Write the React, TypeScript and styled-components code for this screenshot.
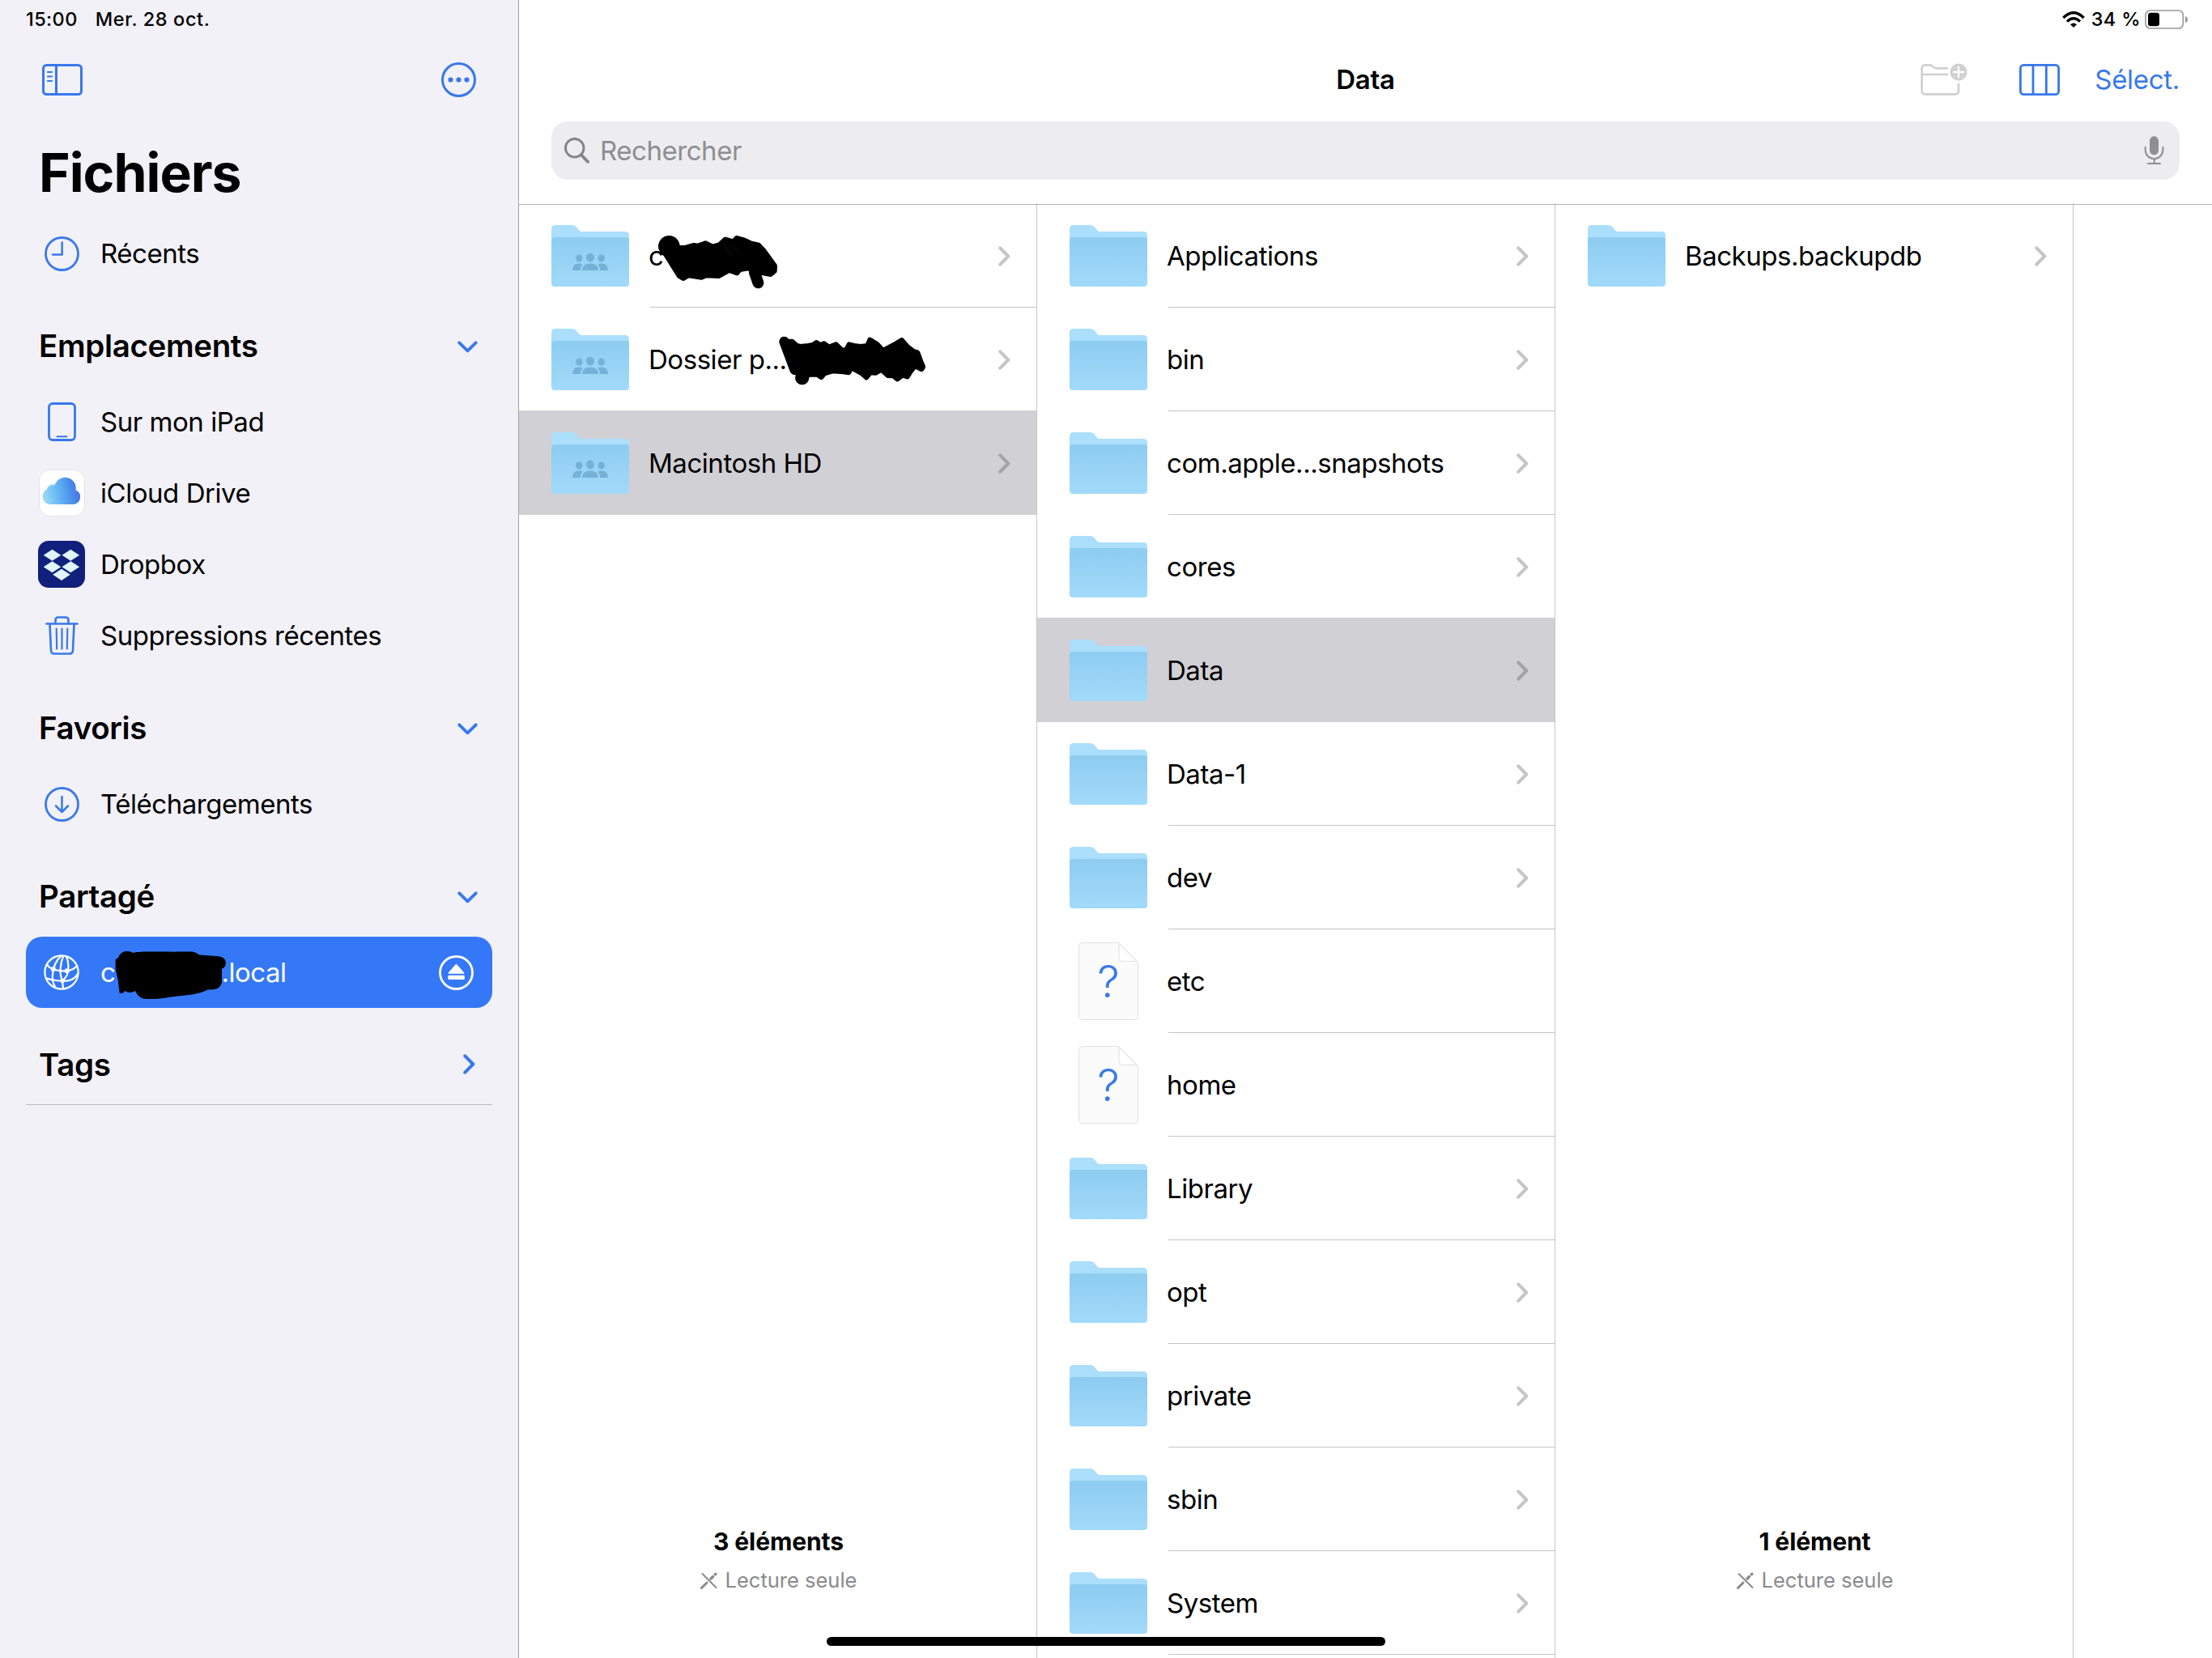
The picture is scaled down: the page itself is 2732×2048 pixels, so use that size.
import React from 'react';
import styled, { createGlobalStyle } from 'styled-components';

const TINT = '#3878ec';
const SELECTED_BLUE = '#3478f7';

interface Entry {
	name: string;
	kind?: 'folder' | 'shared' | 'file';
	selected?: boolean;
	scribble?: 'first' | 'second';
}

const shares: Entry[] = [
	{ name: 'c', kind: 'shared', scribble: 'first' },
	{ name: 'Dossier p...', kind: 'shared', scribble: 'second' },
	{ name: 'Macintosh HD', kind: 'shared', selected: true }
];

const volumes: Entry[] = [
	{ name: 'Applications' },
	{ name: 'bin' },
	{ name: 'com.apple...snapshots' },
	{ name: 'cores' },
	{ name: 'Data', selected: true },
	{ name: 'Data-1' },
	{ name: 'dev' },
	{ name: 'etc', kind: 'file' },
	{ name: 'home', kind: 'file' },
	{ name: 'Library' },
	{ name: 'opt' },
	{ name: 'private' },
	{ name: 'sbin' },
	{ name: 'System' }
];

const backups: Entry[] = [{ name: 'Backups.backupdb' }];

const SidebarIcon = () => (
	<svg width="50" height="39" viewBox="0 0 50 39" fill="none" stroke={TINT} strokeWidth="3">
		<rect x="1.5" y="1.5" width="47" height="36" rx="4" />
		<path d="M17.5 2v35" />
		<path d="M7 10h5M7 15.5h5M7 21h5" strokeWidth="2.2" strokeLinecap="round" />
	</svg>
);

const MoreIcon = () => (
	<svg width="43" height="43" viewBox="0 0 43 43" fill={TINT}>
		<circle cx="21.5" cy="21.5" r="20" fill="none" stroke={TINT} strokeWidth="3" />
		<circle cx="11.5" cy="21.5" r="3.1" />
		<circle cx="21.5" cy="21.5" r="3.1" />
		<circle cx="31.5" cy="21.5" r="3.1" />
	</svg>
);

const ClockIcon = () => (
	<svg width="43" height="43" viewBox="0 0 43 43" fill="none" stroke={TINT} strokeWidth="2.8" strokeLinecap="round" strokeLinejoin="round">
		<circle cx="21.5" cy="21.5" r="20" />
		<path d="M21.7 7.5v15H10" strokeWidth="2.5" />
	</svg>
);

const TabletIcon = () => (
	<svg width="35" height="48" viewBox="0 0 35 48" fill="none" stroke={TINT} strokeWidth="2.8" strokeLinecap="round">
		<rect x="1.5" y="1.5" width="32" height="45" rx="4.5" />
		<path d="M11.5 42.3h12" strokeWidth="2" />
	</svg>
);

const CloudIcon = () => (
	<svg width="57" height="58" viewBox="0 0 57 58">
		<defs>
			<linearGradient id="cloud" x1="0" y1="0.75" x2="1" y2="0.6">
				<stop offset="0" stopColor="#9fdcf3" />
				<stop offset="0.4" stopColor="#67b9f6" />
				<stop offset="0.75" stopColor="#4b91ea" />
				<stop offset="1" stopColor="#4a70e6" />
			</linearGradient>
		</defs>
		<rect x="0.5" y="0.5" width="56" height="57" rx="13" fill="#fff" stroke="#e2e2e6" />
		<circle cx="17.5" cy="26" r="7.8" fill="#8cd0f2" />
		<path d="M14.5 43a9.8 9.8 0 0 1-3-19.2 8 8 0 0 1 8-3.3 13.2 13.2 0 0 1 26 4.8 9.3 9.3 0 0 1-2.2 17.7Z" fill="url(#cloud)" />
	</svg>
);

const DropboxIcon = () => (
	<svg width="58" height="58" viewBox="0 0 58 58">
		<rect width="58" height="58" rx="13" fill="#11207b" />
		<path
			d="M17.5 10.7 28.3 17.7 17.5 24.7 6.7 17.7ZM40.3 10.7 51.1 17.7 40.3 24.7 29.5 17.7ZM17.5 25.2 28.3 32.2 17.5 39.2 6.7 32.2ZM40.3 25.2 51.1 32.2 40.3 39.2 29.5 32.2ZM29 34.7 39.8 41.7 29 49 18.2 41.7Z"
			fill="#dff5ff"
		/>
	</svg>
);

const TrashIcon = () => (
	<svg width="41" height="48" viewBox="0 0 41 48" fill="none" stroke={TINT} strokeWidth="2.6" strokeLinecap="round" strokeLinejoin="round">
		<path d="M1.5 9.5h38" />
		<path d="M12.5 9V5Q12.5 1.5 16 1.5h9Q28.5 1.5 28.5 5V9" />
		<path d="M5.5 10 7 42.5Q7.3 46.5 11 46.5H30Q33.7 46.5 34 42.5L35.5 10" />
		<path d="M13.7 15.5 14.2 40.5M20.5 15.5V40.5M27.3 15.5 26.8 40.5" strokeWidth="2.2" />
	</svg>
);

const DownloadIcon = () => (
	<svg width="43" height="43" viewBox="0 0 43 43" fill="none" stroke={TINT} strokeWidth="2.8" strokeLinecap="round" strokeLinejoin="round">
		<circle cx="21.5" cy="21.5" r="20" />
		<path d="M21.5 12V31M14 23.5 21.5 31 29 23.5" strokeWidth="2.5" />
	</svg>
);

const GlobeIcon = () => (
	<svg width="44" height="44" viewBox="42 89 130 130" fill="none" stroke="#fff" strokeWidth="6.5">
		<circle cx="107" cy="154" r="61" />
		<path d="M106 93C88 110 76 138 74 165C73 182 77 198 85 209" />
		<path d="M114 93C102 122 98 160 110 184L113 215" />
		<path d="M124 95C134 116 134 145 127 164Q122 175 111 184" />
		<path d="M54 126C64 144 100 151 126 149Q150 146 162 132" />
		<path d="M48 174C70 184 112 188 134 184Q158 177 168 156" />
		<g fill="#fff" stroke="none">
			<circle cx="77" cy="142" r="9" />
			<circle cx="127" cy="149" r="9" />
			<circle cx="110" cy="185" r="8" />
		</g>
	</svg>
);

const EjectIcon = () => (
	<svg width="43" height="43" viewBox="0 0 43 43" fill="#fff">
		<circle cx="21.5" cy="21.5" r="20" fill="none" stroke="#fff" strokeWidth="2.8" />
		<path d="M21.5 11.5 30.7 22H12.3Z" stroke="#fff" strokeWidth="1.5" strokeLinejoin="round" />
		<rect x="11.3" y="24.7" width="20.5" height="5.2" rx="1.2" />
	</svg>
);

const WifiIcon = () => (
	<svg width="28" height="20" viewBox="744 42 84 60" fill="none" stroke="#000" strokeWidth="10">
		<path d="M748 66Q786 28 824 66" />
		<path d="M762 80Q786 57 810 80" />
		<path d="M774 91Q786 80 798 91L786 102Z" fill="#000" stroke="none" />
	</svg>
);

const BatteryIcon = () => (
	<svg width="54" height="24" viewBox="1047 36 162 72">
		<rect x="1050" y="39" width="139" height="66" rx="17" fill="none" stroke="#999" strokeWidth="5" />
		<rect x="1059" y="47" width="42" height="50" rx="10" />
		<path d="M1197 60Q1206 63 1206 72T1197 84Z" fill="#999" />
	</svg>
);

const NewFolderIcon = () => (
	<svg width="58" height="40" viewBox="215 232 174 120" fill="none" stroke="#d0d0d0" strokeWidth="8">
		<path d="M317 251H276Q268 251 262 245Q256 239 248 239H233Q220 239 220 252V334Q220 347 233 347H343Q356 347 356 334V306" />
		<path d="M221 274H317" />
		<circle cx="356" cy="265" r="31.5" fill="#d0d0d0" stroke="none" />
		<path d="M337 265H375M356 246V284" stroke="#fff" strokeWidth="7" strokeLinecap="round" />
	</svg>
);

const ColumnsIcon = () => (
	<svg width="50" height="39" viewBox="0 0 50 39" fill="none" stroke={TINT} strokeWidth="2.8">
		<rect x="1.4" y="1.4" width="47.2" height="36.2" rx="4" />
		<path d="M17 2V37M33.3 2V37" />
	</svg>
);

const SearchIcon = () => (
	<svg width="31" height="32" viewBox="0 0 31 32" fill="none" stroke="#858589" strokeWidth="3">
		<circle cx="12.7" cy="12.7" r="11.3" />
		<path d="M20.8 21.3 29 29.8" strokeWidth="3.8" strokeLinecap="round" />
	</svg>
);

const MicIcon = () => (
	<svg width="25" height="36" viewBox="1042 506 75 108" fill="none" stroke="#8e8e93" strokeWidth="6" strokeLinecap="round">
		<rect x="1063" y="507" width="33" height="69" rx="16.5" fill="#8e8e93" stroke="none" />
		<path d="M1047 547V558A32.5 32.5 0 0 0 1112 558V547M1080 591V607M1057 608H1102" />
	</svg>
);

const PencilSlashIcon = () => (
	<svg width="21" height="21" viewBox="0 0 21 21" fill="none" stroke="#8a8a8d" strokeLinecap="round">
		<path d="M2.5 2 19.5 19" strokeWidth="1.9" />
		<path d="M1.5 19.5 8 13" strokeWidth="3" />
		<path d="M13 8 15.5 5.5M18.3 2.7 18.8 2.2" strokeWidth="3.4" />
	</svg>
);

const ChevronIcon = ({ color }: { color: string }) => (
	<svg width="15" height="25" viewBox="0 0 15 25" fill="none" stroke={color} strokeWidth="4" strokeLinecap="round" strokeLinejoin="round">
		<path d="M2.3 2.3 12.3 12.5 2.3 22.7" />
	</svg>
);

const ChevronDownIcon = () => (
	<svg width="25" height="17" viewBox="0 -2 25 17" fill="none" stroke={TINT} strokeWidth="3.8" strokeLinecap="round" strokeLinejoin="round">
		<path d="M2.3 2.3 12.5 12.3 22.7 2.3" />
	</svg>
);

const FolderIcon = ({ shared }: { shared: boolean }) => (
	<svg width="96" height="76" viewBox="0 0 96 76">
		<defs>
			<linearGradient id="folder" x1="0" y1="0" x2="0" y2="1">
				<stop offset="0" stopColor="#8dccf1" />
				<stop offset="1" stopColor="#a2dafa" />
			</linearGradient>
		</defs>
		<path d="M0 30V5Q0 0 5 0H26Q29 0 31 2.5L34 6.5Q35.5 8 38 8H91Q96 8 96 13V30Z" fill="#abdffc" />
		<path d="M0 19Q0 15 4 15H92Q96 15 96 19V72Q96 76 92 76H4Q0 76 0 72Z" fill="url(#folder)" />
		{shared && (
			<g fill="#75b1d6">
				<ellipse cx="34.3" cy="41" rx="4.2" ry="4.5" />
				<ellipse cx="61.7" cy="41" rx="4.2" ry="4.5" />
				<ellipse cx="48" cy="40" rx="5" ry="5.4" />
				<path d="M38 56Q38 47.5 48 47.5T58 56Z" />
				<path d="M26 56Q26 47.5 34 47.5Q37 47.5 38.7 48.7Q35.8 51.5 35.8 56Z" />
				<path d="M70 56Q70 47.5 62 47.5Q59 47.5 57.3 48.7Q60.2 51.5 60.2 56Z" />
			</g>
		)}
	</svg>
);

const UnknownFileIcon = () => (
	<svg width="74" height="96" viewBox="0 0 74 96" fill="#fbfbfc" stroke="#e0e0e2">
		<path d="M4.5 0.5H48Q50 0.5 51 2L72 23Q73.5 24.5 73.5 27V91.5Q73.5 95.5 69.5 95.5H4.5Q0.5 95.5 0.5 91.5V4.5Q0.5 0.5 4.5 0.5Z" />
		<path d="M50 1.5V19.5Q50 23.5 54 23.5H72Z" fill="#fff" />
		<QuestionMark x="37" y="67.5">
			?
		</QuestionMark>
	</svg>
);

const FirstScribble = () => (
	<Scribble $left={12} $top={-5} width="148" height="67" viewBox="428 60 444 201" strokeWidth="16">
		<circle cx="468" cy="103" r="40" stroke="none" />
		<path d="M445 118 505 214 520 223 540 212 560 215 588 219 605 212 652 214 690 193 720 203 731 190 762 185 780 196 845 208 860 195 861 175 820 118 800 97 770 90 745 78 718 71 706 84 676 76 655 95 630 103 603 90 575 100 560 98 530 106 500 108Z" />
		<path d="M785 200 798 238" strokeWidth="42" />
		<path d="M667 92 702 136M705 104 721 119" stroke="#2c2c2c" strokeWidth="1.5" />
	</Scribble>
);

const SecondScribble = () => (
	<Scribble $left={161} $top={-8} width="182" height="61" viewBox="876 435 546 183" strokeWidth="18">
		<path d="M896 457 925 455 943 471 955 474 985 471 1002 468 1015 459 1030 469 1043 463 1062 476 1088 466 1110 487 1124 488 1136 466 1160 472 1180 474 1204 471 1213 449 1240 465 1262 489 1310 463 1331 450 1352 474 1370 488 1388 500 1410 548 1405 558 1380 547 1363 568 1352 586 1335 580 1315 595 1300 583 1280 582 1256 560 1235 572 1215 571 1200 589 1182 573 1144 552 1135 571 1115 568 1075 565 1045 574 1033 588 1018 578 990 578 962 590 935 565Z" />
		<path d="M896 456 935 560" strokeWidth="38" />
		<path d="M1385 500 1403 551" strokeWidth="30" />
		<circle cx="962" cy="590" r="26" stroke="none" />
	</Scribble>
);

const HostScribble = () => (
	<Scribble $left={18} $top={-6} width="138" height="61" viewBox="305 72 415 182" strokeWidth="0">
		<path d="M318 97C325 75 350 68 372 80C400 74 450 77 592 76Q605 77 618 88L690 93Q716 96 717 118Q716 134 702 140V190Q698 215 665 217Q650 215 640 222C600 240 530 240 490 248Q440 255 410 250Q390 245 380 222Q360 234 342 222L334 230H322L316 180 307 140V106Z" />
	</Scribble>
);

const BrowserColumn = ({ entries, summary }: { entries: Entry[]; summary?: string }) => (
	<Column>
		{entries.map(({ name, kind = 'folder', selected = false, scribble }, index) => (
			<Row key={name} $selected={selected}>
				<RowIcon>{kind === 'file' ? <UnknownFileIcon /> : <FolderIcon shared={kind === 'shared'} />}</RowIcon>
				<RowBody $line={!selected && !entries[index + 1]?.selected && entries.length > 1}>
					<RowName>
						{name}
						{scribble === 'first' && <FirstScribble />}
						{scribble === 'second' && <SecondScribble />}
					</RowName>
					{kind !== 'file' && <ChevronIcon color={selected ? '#a3a3a7' : '#c5c5c7'} />}
				</RowBody>
			</Row>
		))}
		{summary && (
			<Summary>
				<SummaryCount>{summary}</SummaryCount>
				<SummaryNote>
					<PencilSlashIcon />
					Lecture seule
				</SummaryNote>
			</Summary>
		)}
	</Column>
);

const App = () => {
	return (
		<>
			<GlobalStyle />
			<Screen>
				<Sidebar>
					<StatusBar>
						<span>15:00</span>
						<StatusDate>Mer. 28 oct.</StatusDate>
					</StatusBar>
					<SidebarToolbar>
						<SidebarIcon />
						<MoreIcon />
					</SidebarToolbar>
					<SidebarTitle>Fichiers</SidebarTitle>
					<SidebarItem>
						<ItemIcon>
							<ClockIcon />
						</ItemIcon>
						<ItemName>Récents</ItemName>
					</SidebarItem>

					<SectionHeader>
						Emplacements
						<ChevronDownIcon />
					</SectionHeader>
					<SidebarItem>
						<ItemIcon>
							<TabletIcon />
						</ItemIcon>
						<ItemName>Sur mon iPad</ItemName>
					</SidebarItem>
					<SidebarItem>
						<ItemIcon>
							<CloudIcon />
						</ItemIcon>
						<ItemName>iCloud Drive</ItemName>
					</SidebarItem>
					<SidebarItem>
						<ItemIcon>
							<DropboxIcon />
						</ItemIcon>
						<ItemName>Dropbox</ItemName>
					</SidebarItem>
					<SidebarItem>
						<ItemIcon>
							<TrashIcon />
						</ItemIcon>
						<ItemName>Suppressions récentes</ItemName>
					</SidebarItem>

					<SectionHeader>
						Favoris
						<ChevronDownIcon />
					</SectionHeader>
					<SidebarItem>
						<ItemIcon>
							<DownloadIcon />
						</ItemIcon>
						<ItemName>Téléchargements</ItemName>
					</SidebarItem>

					<SectionHeader>
						Partagé
						<ChevronDownIcon />
					</SectionHeader>
					<SidebarItem $active>
						<ItemIcon>
							<GlobeIcon />
						</ItemIcon>
						<ItemName>
							c<HiddenPart />
							.local
							<HostScribble />
						</ItemName>
						<EjectIcon />
					</SidebarItem>

					<SectionHeader $line>
						Tags
						<ChevronIcon color={TINT} />
					</SectionHeader>
				</Sidebar>

				<Main>
					<Header>
						<StatusBar $end>
							<WifiIcon />
							<span>34 %</span>
							<BatteryIcon />
						</StatusBar>
						<Toolbar>
							<PageTitle>Data</PageTitle>
							<Actions>
								<NewFolderIcon />
								<ColumnsIcon />
								<SelectBtn>Sélect.</SelectBtn>
							</Actions>
						</Toolbar>
						<SearchField>
							<SearchIcon />
							<SearchText>Rechercher</SearchText>
							<MicIcon />
						</SearchField>
					</Header>
					<Columns>
						<BrowserColumn entries={shares} summary="3 éléments" />
						<BrowserColumn entries={volumes} />
						<BrowserColumn entries={backups} summary="1 élément" />
					</Columns>
				</Main>
				<HomeIndicator />
			</Screen>
		</>
	);
};

export default App;

const GlobalStyle = createGlobalStyle`
	* {
		box-sizing: border-box;
	}
	body {
		margin: 0;
		background: #fff;
		font-family: Inter, 'Liberation Sans', sans-serif;
		color: #000;
	}
	svg {
		display: block;
		flex-shrink: 0;
	}
`;

const Screen = styled.div`
	position: relative;
	display: flex;
	width: 2732px;
	height: 2048px;
	overflow: hidden;
	background: #fff;
`;

const Sidebar = styled.aside`
	display: flex;
	flex-direction: column;
	flex-shrink: 0;
	width: 641px;
	padding: 0 32px;
	background: #f2f1f8;
	border-right: 1px solid #a3a3a8;
`;

const StatusBar = styled.div<{ $end?: boolean }>`
	display: flex;
	align-items: center;
	justify-content: ${(props) => (props.$end ? 'flex-end' : 'flex-start')};
	gap: ${(props) => (props.$end ? '0' : '22px')};
	height: 48px;
	padding-right: ${(props) => (props.$end ? '29px' : '0')};
	font-size: 23.5px;
	font-weight: 450;
	white-space: nowrap;
	span {
		padding-bottom: 1px;
		letter-spacing: 0.4px;
	}
	svg + span {
		margin: 0 5px 0 8px;
	}
`;

const StatusDate = styled.span`
	&& {
		letter-spacing: 0.6px;
	}
`;

const SidebarToolbar = styled.div`
	display: flex;
	align-items: center;
	justify-content: space-between;
	height: 101px;
	padding: 0 20px;
`;

const SidebarTitle = styled.h1`
	display: flex;
	align-items: center;
	height: 120px;
	margin: 0;
	padding: 8px 0 0 16px;
	font-size: 66px;
	font-weight: 700;
	letter-spacing: -1px;
`;

const SectionHeader = styled.h2<{ $line?: boolean }>`
	display: flex;
	align-items: center;
	justify-content: space-between;
	height: 120px;
	margin: 0;
	padding: ${(props) => (props.$line ? '20px 21px 0 16px' : '20px 18px 0 16px')};
	border-bottom: ${(props) => (props.$line ? '1px solid #bcbbc1' : 'none')};
	font-size: 38.5px;
	font-weight: 600;
	letter-spacing: -0.35px;
`;

const SidebarItem = styled.div<{ $active?: boolean }>`
	display: flex;
	align-items: center;
	width: 576px;
	height: 88px;
	padding: 0 23px 0 15px;
	border-radius: 20px;
	color: ${(props) => (props.$active ? '#fff' : '#000')};
	background: ${(props) => (props.$active ? SELECTED_BLUE : 'transparent')};
`;

const ItemIcon = styled.div`
	display: flex;
	justify-content: center;
	width: 58px;
	margin-right: 19px;
`;

const ItemName = styled.div`
	position: relative;
	flex: 1;
	font-size: 33px;
	line-height: 42px;
	letter-spacing: -0.46px;
	white-space: nowrap;
`;

const HiddenPart = styled.span`
	display: inline-block;
	width: 131px;
`;

const Main = styled.main`
	display: flex;
	flex-direction: column;
	flex: 1;
`;

const Header = styled.header`
	height: 253px;
	border-bottom: 1px solid #b2b2b4;
`;

const Toolbar = styled.div`
	display: grid;
	grid-template-columns: 1fr auto 1fr;
	align-items: center;
	height: 102px;
	padding: 0 40px 2px;
`;

const PageTitle = styled.div`
	grid-column: 2;
	font-size: 33px;
	font-weight: 600;
	letter-spacing: -0.2px;
`;

const Actions = styled.div`
	display: flex;
	align-items: center;
	justify-content: flex-end;
	svg + svg {
		margin: 0 43px 0 64px;
	}
`;

const SelectBtn = styled.button`
	padding: 0;
	border: none;
	background: none;
	font: inherit;
	font-size: 33px;
	letter-spacing: -0.3px;
	color: ${TINT};
`;

const SearchField = styled.div`
	display: flex;
	align-items: center;
	height: 72px;
	margin: 0 40px;
	padding: 0 19px 0 16px;
	border-radius: 20px;
	background: #ededef;
`;

const SearchText = styled.span`
	flex: 1;
	margin-left: 13px;
	font-size: 33px;
	letter-spacing: -0.46px;
	color: #8e8e92;
`;

/* columns tuck under the header's hairline */
const Columns = styled.div`
	display: flex;
	flex: 1;
	min-height: 0;
	margin-top: -1px;
`;

const Column = styled.section`
	display: flex;
	flex-direction: column;
	width: 640px;
	border-right: 1px solid rgba(60, 60, 67, 0.29);
`;

const Row = styled.div<{ $selected: boolean }>`
	display: flex;
	flex-shrink: 0;
	height: ${(props) => (props.$selected ? '129px' : '128px')};
	margin-top: ${(props) => (props.$selected ? '-1px' : '0')};
	padding: ${(props) => (props.$selected ? '1px 0 0 40px' : '0 0 0 40px')};
	background: ${(props) => (props.$selected ? '#d1d0d5' : 'transparent')};
`;

const RowIcon = styled.div`
	display: flex;
	align-items: center;
	justify-content: center;
	width: 96px;
	margin-right: 26px;
`;

const RowBody = styled.div<{ $line: boolean }>`
	display: flex;
	flex: 1;
	align-items: center;
	justify-content: space-between;
	padding: 1px 32px 0 0;
	border-bottom: 1px solid ${(props) => (props.$line ? '#c5c5c7' : 'transparent')};
`;

const RowName = styled.div`
	position: relative;
	margin-left: -2px;
	font-size: 33px;
	line-height: 42px;
	letter-spacing: -0.46px;
	white-space: nowrap;
`;

const Scribble = styled.svg<{ $left: number; $top: number }>`
	position: absolute;
	left: ${(props) => props.$left}px;
	top: ${(props) => props.$top}px;
	fill: #000;
	stroke: #000;
	stroke-linecap: round;
	stroke-linejoin: round;
`;

const QuestionMark = styled.text`
	font-family: Inter, sans-serif;
	font-size: 55px;
	font-weight: 300;
	text-anchor: middle;
	fill: ${TINT};
	stroke: none;
`;

const Summary = styled.footer`
	display: flex;
	flex-direction: column;
	align-items: center;
	margin-top: auto;
	padding: 0 0 76px 2px;
`;

const SummaryCount = styled.div`
	font-size: 30px;
	font-weight: 700;
	line-height: 40px;
	letter-spacing: -0.1px;
`;

const SummaryNote = styled.div`
	display: flex;
	align-items: center;
	gap: 10px;
	margin-top: 8px;
	font-size: 25.5px;
	line-height: 40px;
	color: #8a8a8d;
`;

const HomeIndicator = styled.div`
	position: absolute;
	left: 1021px;
	bottom: 15px;
	width: 690px;
	height: 11px;
	border-radius: 6px;
	background: #000;
`;
